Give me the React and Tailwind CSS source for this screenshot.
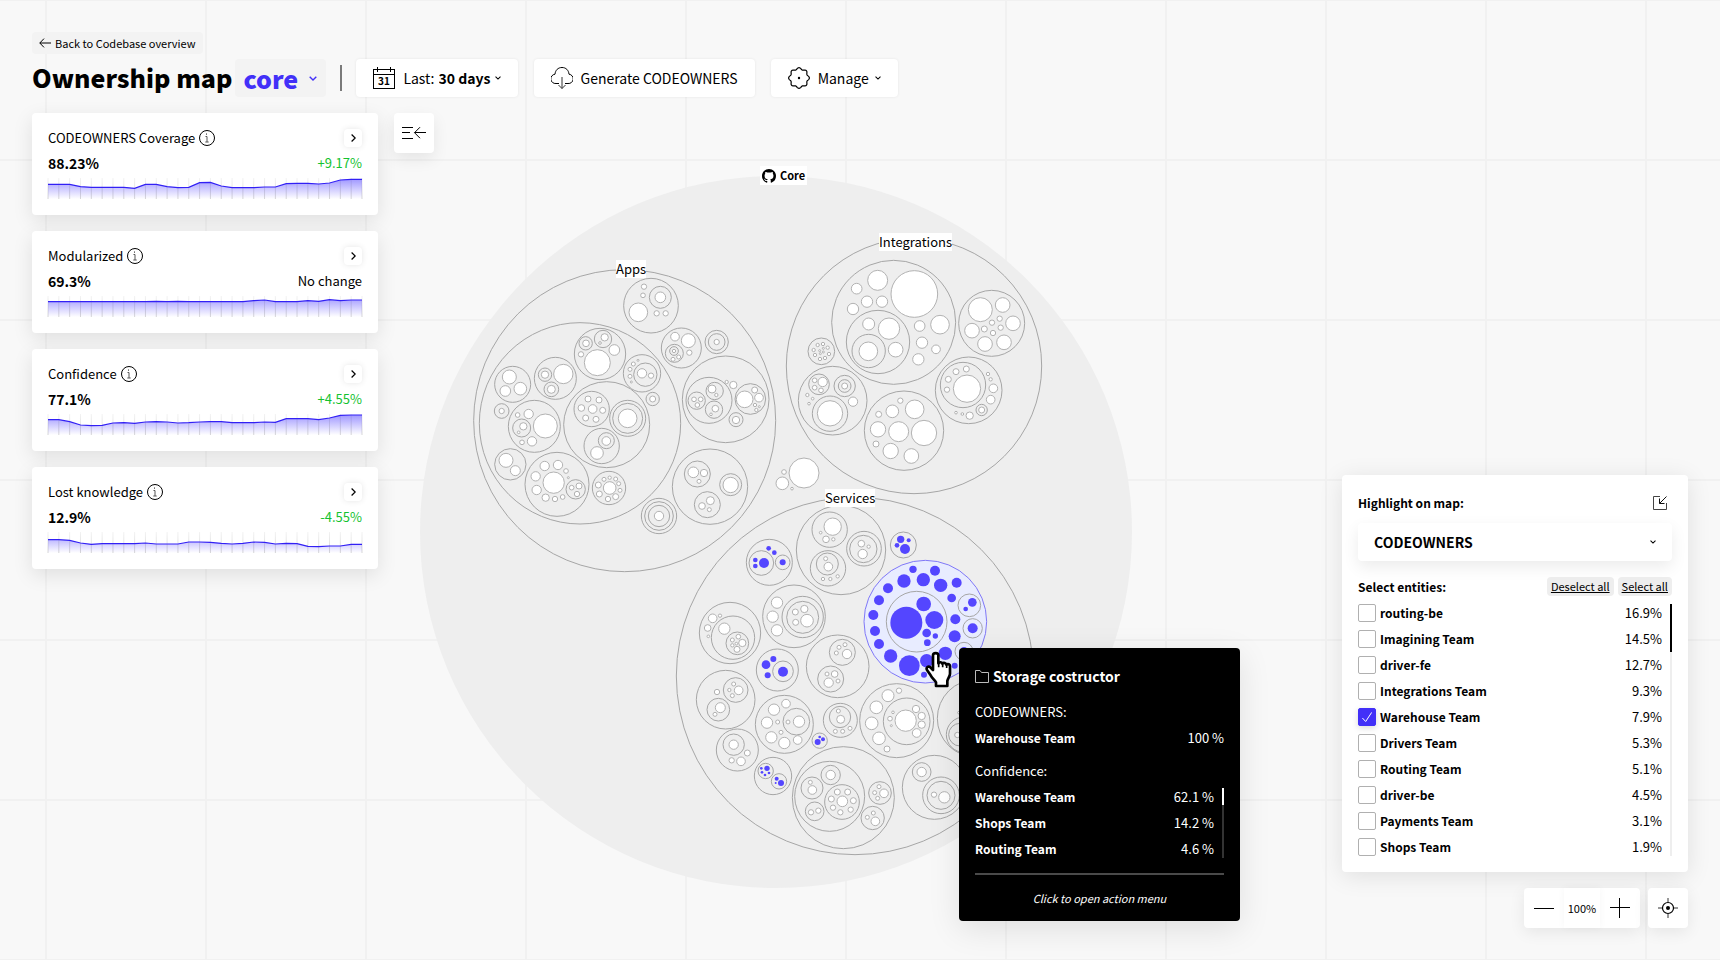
import React, { useState } from 'react'

const metrics = [
    {
        title: 'CODEOWNERS Coverage',
        value: '88.23%',
        change: '+9.17%',
        points: [19, 19, 19, 26, 28, 28, 28, 28, 31, 19, 19, 26, 29, 28, 14, 13, 24, 29, 29, 29, 27, 27, 17, 16, 16, 18, 15, 6, 4, 4]
    },
    {
        title: 'Modularized',
        value: '69.3%',
        change: 'No change',
        points: [17, 17, 17, 17, 17, 17, 17, 17, 17, 17, 16, 17, 16, 17, 17, 17, 17, 17, 17, 14, 12, 17, 17, 17, 14, 16, 11, 14, 12, 12]
    },
    {
        title: 'Confidence',
        value: '77.1%',
        change: '+4.55%',
        points: [17, 17, 23, 33, 35, 34, 27, 26, 28, 24, 23, 24, 27, 26, 24, 23, 23, 26, 26, 26, 24, 25, 14, 14, 14, 17, 12, 4, 3, 3]
    },
    {
        title: 'Lost knowledge',
        value: '12.9%',
        change: '-4.55%',
        points: [23, 23, 25, 33, 37, 35, 35, 35, 35, 33, 36, 36, 36, 30, 30, 31, 34, 36, 34, 30, 31, 36, 34, 35, 43, 44, 42, 42, 37, 37]
    }
]

const entities = [
    ['routing-be', '16.9%'],
    ['Imagining Team', '14.5%'],
    ['driver-fe', '12.7%'],
    ['Integrations Team', '9.3%'],
    ['Warehouse Team', '7.9%'],
    ['Drivers Team', '5.3%'],
    ['Routing Team', '5.1%'],
    ['driver-be', '4.5%'],
    ['Payments Team', '3.1%'],
    ['Shops Team', '1.9%']
]

const confidence = [
    ['Warehouse Team', '62.1 %'],
    ['Shops Team', '14.2 %'],
    ['Routing Team', '4.6 %']
]

// Circles are [cx, cy, r] in thirds of a pixel, relative to the cluster origin
const clusters = [
    {
        name: 'Apps',
        origin: [460, 260],
        rings: [
            [494, 482, 453], [360, 490, 302], [573, 137, 82], [601, 112, 33], [664, 264, 60], [643, 280, 27], [642, 273, 13],
            [770, 246, 35], [770, 246, 25], [797, 418, 130], [747, 421, 69], [764, 393, 26], [710, 422, 26], [762, 449, 26],
            [871, 417, 46], [828, 479, 21], [750, 680, 113], [712, 642, 39], [812, 674, 33], [742, 734, 39],
            [597, 768, 53], [597, 768, 43], [597, 768, 32], [578, 417, 20], [546, 340, 56], [556, 344, 35],
            [420, 282, 77], [377, 250, 20], [429, 237, 26], [286, 355, 63], [255, 344, 20], [274, 388, 22], [158, 373, 54],
            [125, 453, 22], [223, 499, 78], [185, 504, 27], [440, 494, 129], [395, 447, 53], [503, 475, 54], [503, 475, 45],
            [425, 558, 53], [439, 542, 24], [151, 613, 47], [291, 673, 96], [347, 688, 29], [447, 684, 50]
        ],
        leaves: [
            [601, 112, 16], [552, 80, 8], [549, 106, 7], [535, 157, 28], [590, 160, 8], [617, 160, 8],
            [645, 230, 13], [685, 242, 21], [688, 278, 8], [642, 273, 5], [639, 298, 6], [656, 291, 6], [770, 246, 8],
            [756, 387, 12], [769, 405, 5], [702, 418, 7], [722, 418, 7], [712, 435, 7], [766, 446, 10], [753, 463, 4],
            [800, 366, 5], [820, 375, 11], [854, 418, 25], [884, 390, 9], [897, 413, 13], [885, 435, 5], [898, 440, 3],
            [889, 450, 5], [828, 480, 11], [700, 637, 16], [732, 639, 11], [717, 664, 6], [812, 675, 23],
            [751, 722, 12], [726, 738, 10], [748, 749, 6], [597, 768, 14], [578, 417, 9],
            [546, 340, 14], [573, 347, 8], [534, 301, 3], [520, 312, 6], [510, 328, 6], [510, 349, 6], [514, 366, 3],
            [378, 250, 10], [434, 232, 11], [420, 249, 4], [463, 270, 16], [363, 283, 8], [412, 308, 39],
            [255, 344, 11], [274, 388, 12], [310, 342, 29], [148, 351, 21], [181, 386, 19], [136, 393, 16], [125, 453, 8],
            [206, 462, 14], [173, 465, 7], [256, 498, 36], [216, 544, 14], [186, 547, 7], [190, 499, 11], [176, 517, 4],
            [384, 417, 9], [417, 420, 9], [364, 444, 10], [398, 447, 13], [428, 451, 9], [377, 474, 9], [408, 478, 9],
            [503, 475, 28], [439, 543, 13], [411, 579, 19], [138, 601, 21], [166, 632, 15],
            [254, 618, 14], [294, 615, 14], [318, 633, 7], [325, 653, 3], [227, 649, 14], [281, 668, 32], [230, 690, 14],
            [257, 713, 11], [285, 717, 8], [308, 711, 7], [335, 683, 7], [357, 678, 9], [351, 702, 8],
            [449, 684, 19], [432, 658, 6], [449, 653, 5], [467, 657, 6], [476, 671, 6], [480, 691, 6], [415, 675, 9],
            [418, 702, 9], [444, 717, 8], [467, 710, 9]
        ],
        owned: []
    },
    {
        name: 'Integrations',
        origin: [770, 220],
        rings: [
            [432, 438, 383], [371, 307, 186], [324, 366, 95], [296, 393, 50], [665, 310, 99], [154, 394, 40],
            [188, 542, 103], [147, 493, 31], [224, 498, 32], [224, 498, 19], [180, 581, 53], [402, 632, 119],
            [596, 511, 100], [579, 495, 68], [635, 570, 17]
        ],
        leaves: [
            [323, 181, 30], [433, 222, 70], [260, 206, 16], [291, 245, 17], [336, 245, 17], [249, 267, 17], [449, 318, 16],
            [510, 314, 28], [456, 368, 17], [498, 388, 13], [445, 418, 17], [296, 312, 18], [357, 326, 32], [377, 389, 22],
            [295, 394, 28], [631, 269, 36], [698, 255, 22], [729, 310, 22], [606, 332, 22], [645, 372, 22], [702, 367, 22],
            [689, 296, 8], [666, 308, 8], [643, 327, 9], [692, 323, 8], [669, 339, 8],
            [143, 375, 5], [159, 372, 5], [173, 383, 5], [131, 390, 5], [177, 402, 5], [135, 405, 5], [150, 417, 5],
            [165, 414, 5], [149, 392, 3], [160, 385, 3], [160, 396, 3], [151, 401, 3],
            [158, 486, 14], [134, 481, 7], [134, 503, 7], [153, 511, 7], [224, 498, 9], [112, 525, 5], [128, 536, 4],
            [117, 551, 4], [249, 545, 14], [180, 580, 38], [391, 542, 8], [434, 568, 28], [367, 574, 19], [326, 583, 9],
            [324, 628, 23], [386, 635, 30], [462, 639, 38], [318, 672, 9], [362, 693, 23], [424, 708, 22],
            [558, 455, 9], [589, 447, 9], [535, 478, 9], [531, 509, 8], [591, 506, 41], [654, 462, 5], [662, 478, 5],
            [670, 505, 13], [662, 539, 13], [558, 578, 4], [577, 582, 4], [599, 587, 11], [635, 570, 9],
            [102, 759, 45], [42, 756, 7], [37, 790, 19], [66, 806, 4]
        ],
        owned: []
    },
    {
        name: 'Services, upper',
        origin: [660, 480],
        rings: [
            [585, 588, 536], [543, 210, 134], [509, 149, 53], [612, 206, 52], [610, 207, 41], [504, 265, 53], [502, 252, 33],
            [328, 247, 69], [304, 249, 37], [368, 247, 22], [730, 195, 39], [402, 409, 94], [428, 411, 62], [428, 412, 48],
            [210, 459, 92], [219, 473, 65], [232, 490, 34], [352, 570, 63], [369, 574, 31], [533, 559, 94], [547, 517, 39],
            [512, 597, 39], [770, 425, 91], [928, 376, 34], [938, 445, 29], [912, 514, 27]
        ],
        leaves: [
            [518, 140, 26], [482, 158, 4], [498, 178, 10], [520, 178, 5], [604, 191, 10], [626, 200, 5], [608, 222, 14],
            [497, 236, 6], [505, 260, 13], [489, 297, 5], [511, 297, 5], [533, 289, 5], [351, 368, 17], [338, 410, 17],
            [351, 451, 17], [406, 396, 9], [433, 387, 11], [407, 427, 9], [441, 422, 19], [158, 415, 13], [180, 407, 5],
            [143, 444, 10], [145, 469, 4], [193, 446, 17], [235, 470, 7], [217, 480, 6], [247, 489, 11], [217, 496, 5],
            [231, 508, 9], [229, 491, 4], [555, 494, 6], [537, 502, 6], [529, 519, 6], [561, 522, 14],
            [501, 582, 6], [524, 582, 10], [506, 608, 14], [534, 603, 6]
        ],
        owned: [
            [312, 249, 15], [286, 240, 7], [286, 258, 7], [326, 205, 7], [343, 218, 7], [368, 247, 9],
            [722, 178, 11], [746, 181, 6], [711, 196, 7], [735, 207, 15], [340, 537, 9], [318, 554, 13], [323, 586, 9],
            [369, 575, 15], [739, 428, 48], [791, 372, 22], [823, 420, 27], [800, 459, 13], [826, 468, 8], [802, 488, 10],
            [759, 268, 11], [825, 272, 15], [732, 303, 20], [790, 299, 20], [842, 316, 20], [890, 308, 15], [684, 325, 15],
            [875, 354, 13], [657, 361, 15], [640, 405, 15], [886, 418, 15], [645, 453, 15], [884, 469, 18], [657, 492, 15],
            [692, 528, 20], [856, 520, 20], [748, 557, 31], [800, 542, 20], [884, 557, 9], [792, 584, 9],
            [937, 367, 13], [917, 387, 7], [938, 445, 15], [912, 512, 11]
        ]
    },
    {
        name: 'Services, lower',
        origin: [660, 660],
        rings: [
            [197, 119, 88], [227, 90, 37], [175, 149, 34], [373, 193, 87], [409, 185, 40], [541, 181, 51], [540, 171, 32],
            [479, 242, 23], [710, 182, 111], [740, 184, 70], [232, 270, 63], [221, 254, 32], [339, 348, 56], [317, 333, 23],
            [357, 364, 23], [550, 413, 153], [509, 409, 105], [456, 384, 33], [512, 345, 29], [464, 454, 28], [546, 426, 52],
            [660, 399, 34], [638, 474, 35], [823, 382, 96], [785, 336, 28], [843, 406, 55], [843, 406, 42],
            [948, 175, 116], [912, 224, 53], [900, 224, 34]
        ],
        leaves: [
            [221, 72, 6], [208, 90, 5], [236, 91, 13], [217, 107, 6], [171, 96, 8], [181, 143, 15], [165, 163, 6],
            [378, 131, 13], [342, 149, 17], [321, 188, 17], [353, 186, 6], [384, 186, 6], [363, 217, 6], [334, 232, 17],
            [373, 249, 17], [413, 240, 13], [417, 185, 17], [535, 153, 6], [542, 178, 12], [526, 214, 6], [548, 214, 6],
            [570, 205, 6], [684, 107, 18], [717, 92, 8], [649, 142, 19], [635, 190, 19], [657, 235, 19], [681, 267, 9],
            [737, 182, 32], [768, 147, 11], [785, 168, 11], [785, 194, 11], [770, 219, 13], [699, 157, 4], [690, 176, 7],
            [694, 197, 3], [221, 254, 14], [262, 279, 9], [215, 301, 8], [243, 304, 13], [451, 367, 6], [457, 390, 13],
            [512, 345, 14], [453, 457, 8], [475, 452, 8], [547, 424, 16], [532, 396, 9], [563, 396, 9], [514, 417, 9],
            [580, 422, 9], [519, 443, 8], [572, 449, 8], [541, 457, 8], [657, 380, 6], [644, 398, 6], [672, 400, 13],
            [653, 415, 6], [640, 459, 6], [622, 472, 6], [646, 484, 13], [785, 336, 14], [822, 404, 8], [853, 412, 17],
            [897, 158, 4], [892, 225, 8]
        ],
        owned: [
            [473, 246, 9], [489, 238, 6], [479, 231, 4], [321, 325, 8], [304, 325, 4], [306, 337, 4], [327, 339, 4],
            [315, 345, 4], [350, 356, 6], [363, 369, 9], [347, 369, 3]
        ]
    }
]

const Circles = ({ items, origin }) => items.map(([x, y, r]) => (
    <circle key={`${x}-${y}-${r}`} cx={origin[0] + x / 3} cy={origin[1] + y / 3} r={r / 3} />
))

const OwnershipMap = () => (
    <svg className="absolute inset-0 w-full h-full" aria-hidden="true">
        <circle cx="776" cy="532" r="356" fill="#eeeeee" />
        <circle cx={660 + 796 / 3} cy={480 + 425 / 3} r={184 / 3} fill="#e8ecff" stroke="#8078f7" />
        {clusters.map(({ name, origin, rings, leaves, owned }) => (
            <g key={name}>
                <g fill="none" stroke="#a6a6a6"><Circles items={rings} origin={origin} /></g>
                <g fill="#ffffff" stroke="#b2b2b2"><Circles items={leaves} origin={origin} /></g>
                <g fill="#5446ff"><Circles items={owned} origin={origin} /></g>
            </g>
        ))}
    </svg>
)

const HandCursor = () => (
    <svg className="absolute left-[925px] top-[650px] z-30" width="28" height="38" viewBox="0 0 84 114" aria-hidden="true">
        <path
            d="M24 16c0-9 16-9 16 0v24c4-5 11-4 12 1 4-4 11-2 12 3 5-4 11-1 11 5v22c0 8-7 14-8 22v15H33V97c-4-7-11-12-16-21L6 60c-4-8 4-13 10-8l8 8z"
            fill="#fff" stroke="#000" strokeWidth="8" strokeLinejoin="round"
        />
        <path d="M41 38v14M53 40v12M65 44v10" fill="none" stroke="#000" strokeWidth="5" />
    </svg>
)

const Caret = ({ className }) => (
    <svg className={className} viewBox="0 0 8 5" fill="none" stroke="currentColor" strokeWidth="1.4" aria-hidden="true">
        <path d="M.7.7 4 4 7.3.7" />
    </svg>
)

// Eight soft teeth around the centre
const gearPath = Array.from({ length: 97 }, (_, i) => {
    const a = (i / 96) * Math.PI * 2
    const r = 9.5 + 0.9 * Math.cos(8 * a)
    return `${i ? 'L' : 'M'}${(11 + r * Math.sin(a)).toFixed(2)} ${(11 - r * Math.cos(a)).toFixed(2)}`
}).join('')

const Sparkline = ({ id, points }) => {
    const line = points.map((y, x) => `${x},${y}`).join(' ')
    return (
        <svg className="block w-full h-[21px] mt-[3px] overflow-visible" viewBox="0 0 29 63" preserveAspectRatio="none" aria-hidden="true">
            <defs>
                <linearGradient id={`${id}-area`} gradientUnits="userSpaceOnUse" x1="0" y1="0" x2="0" y2="63">
                    <stop offset="0" stopColor="#4a3aff" stopOpacity="0.55" />
                    <stop offset="1" stopColor="#4a3aff" stopOpacity="0" />
                </linearGradient>
                <linearGradient id={`${id}-tick`} gradientUnits="userSpaceOnUse" x1="0" y1="0" x2="0" y2="63">
                    <stop offset="0" stopColor="#000" stopOpacity="0.05" />
                    <stop offset="1" stopColor="#000" stopOpacity="0.16" />
                </linearGradient>
            </defs>
            <polygon points={`0,63 ${line} 29,63`} fill={`url(#${id}-area)`} />
            {points.map((_, x) => (
                <path key={x} d={`M${x} 0L${x + 0.001} 63`} stroke={`url(#${id}-tick)`} vectorEffect="non-scaling-stroke" />
            ))}
            <polyline points={line} fill="none" stroke="#3220f5" strokeWidth="1.2" vectorEffect="non-scaling-stroke" />
        </svg>
    )
}

const MetricCard = ({ id, title, value, change, points }) => (
    <section className="p-4 bg-white rounded shadow-[0_6px_20px_rgba(0,0,0,0.1)]">
        <div className="flex items-center h-[18px]">
            <h2 className="text-[13px] leading-[18px]">{title}</h2>
            <svg className="w-4 h-4 ml-1" viewBox="0 0 16 16" fill="none" stroke="#000" aria-hidden="true">
                <circle cx="8" cy="8" r="7.5" />
                <path d="M6.5 6.5H8V12M6.3 12h3.4" stroke="#555" />
                <path d="M7.5 3.5v1.200" stroke="#333" />
            </svg>
            <button aria-label={`Open ${title}`} className="ml-auto w-[18px] h-[18px] flex items-center justify-center bg-white rounded-sm shadow-[0_0_6px_rgba(0,0,0,0.1)]">
                <svg className="w-[5px] h-2" viewBox="0 0 5 8" fill="none" stroke="#000" strokeWidth="1.2" aria-hidden="true">
                    <path d="M.6.5 4.2 4 .6 7.5" />
                </svg>
            </button>
        </div>
        <div className="flex items-center justify-between mt-1 h-6">
            <p className="text-[14px] font-bold">{value}</p>
            <p className={change === 'No change' ? 'text-[13px]' : 'text-[13px] text-[#14c22f]'}>{change}</p>
        </div>
        <Sparkline id={id} points={points} />
    </section>
)

const toolbarButton = 'h-[38px] px-[17px] flex items-center bg-white rounded text-[14px] shadow-[0_0_3px_rgba(0,0,0,0.08)]'

const Header = () => (
    <header className="relative z-10">
        <a href="#overview" className="flex w-fit items-center h-[22px] px-[7px] rounded bg-[#f3f3f3] text-[11px]">
            <svg className="w-3 h-[10px] mr-1" viewBox="0 0 12 10" fill="none" stroke="#000" aria-hidden="true">
                <path d="M12 5H.8M5 .6.8 5 5 9.4" />
            </svg>
            Back to Codebase overview
        </a>
        <div className="flex items-center h-[38px] mt-[5px]">
            <h1 className="text-[25px] font-black">Ownership map</h1>
            <div className="relative ml-[3px]">
                <select aria-label="Repository" className="appearance-none h-[38px] pl-2 pr-7 rounded bg-[#f3f3f3] text-[25px] leading-[38px] font-black text-[#4230f8]">
                    <option>core</option>
                </select>
                <Caret className="absolute right-[9px] top-[17px] w-2 h-[5px] text-[#4230f8] pointer-events-none" />
            </div>
            <span className="w-[2px] h-[26px] mx-[14px] bg-[#7a7a7a]" />
            <div className="flex gap-4">
                <label className={toolbarButton}>
                    <svg className="w-[22px] h-[22px] mr-2" viewBox="0 0 22 22" fill="none" stroke="#000" aria-hidden="true">
                        <rect x="0.5" y="2.5" width="21" height="19" />
                        <path d="M0 7.5h22M4.5 0v5M17.5 0v5" />
                        <text x="11" y="18" textAnchor="middle" fontSize="10" fontWeight="700" fill="#000" stroke="none">31</text>
                    </svg>
                    Last:
                    <span className="relative ml-1">
                        <select className="appearance-none h-[38px] pr-[10px] leading-[38px] font-bold">
                            <option>30 days</option>
                        </select>
                        <Caret className="absolute right-0 top-[17px] w-[6px] h-1 pointer-events-none" />
                    </span>
                </label>
                <button className={toolbarButton}>
                    <svg className="w-[22px] h-[22px] mr-2" viewBox="0 0 22 22" fill="none" stroke="#000" aria-hidden="true">
                        <path d="M8 16.5H5A4.6 4.6 0 0 1 4 7.2C4.400 3.200 7 .5 11 .5s6.600 2.700 7 6.700A4.600 4.600 0 0 1 17 16.500H14" />
                        <path d="M11 10v11.500M7.500 18 11 21.500l3.500-3.500" stroke="#333" />
                    </svg>
                    Generate CODEOWNERS
                </button>
                <button className={toolbarButton}>
                    <svg className="w-[22px] h-[22px] mr-2" viewBox="0 0 22 22" fill="none" stroke="#000" strokeWidth="1.2" strokeLinejoin="round" aria-hidden="true">
                        <path d={gearPath} />
                        <circle cx="11" cy="11" r="1.2" fill="#000" stroke="none" />
                    </svg>
                    Manage
                    <Caret className="ml-[6px] w-[6px] h-1" />
                </button>
            </div>
        </div>
    </header>
)

const Tooltip = () => (
    <div role="tooltip" className="absolute left-[959px] top-[648px] z-20 w-[281px] p-4 bg-black text-white rounded text-[13px] shadow-[0_8px_32px_rgba(0,0,0,0.1)]">
        <h2 className="flex items-center text-[14px] leading-6 font-bold">
            <svg className="w-[14px] h-[13px] mr-1" viewBox="0 0 14 13" fill="none" stroke="#bbb" aria-hidden="true">
                <path d="M.5 12.500V.500h4.500l1.500 2h7v10z" />
            </svg>
            Storage costructor
        </h2>
        <h3 className="mt-[11px] leading-[26px]">CODEOWNERS:</h3>
        <p className="flex justify-between leading-[26px]">
            <span className="text-[12px] font-bold">Warehouse Team</span>
            <span>100 %</span>
        </p>
        <h3 className="mt-[7px] leading-[26px]">Confidence:</h3>
        <div className="flex">
            <ul className="flex-1">
                {confidence.map(([team, share]) => (
                    <li key={team} className="flex justify-between leading-[26px]">
                        <span className="text-[12px] font-bold">{team}</span>
                        <span>{share}</span>
                    </li>
                ))}
            </ul>
            <div className="w-[2px] my-1 ml-2 bg-[#333]">
                <div className="h-[17px] bg-white" />
            </div>
        </div>
        <hr className="mt-[11px] border-t-2 border-[#4a4a4a]" />
        <p className="mt-4 text-center text-[11px] leading-[14px] italic">Click to open action menu</p>
    </div>
)

const HighlightPanel = () => {
    const [selected, setSelected] = useState(['Warehouse Team'])

    const toggle = (name) => {
        setSelected(prev => prev.includes(name) ? prev.filter(n => n !== name) : [...prev, name])
    }

    return (
        <section className="w-[346px] p-4 bg-white rounded shadow-[0_4px_24px_rgba(0,0,0,0.1)]">
            <div className="flex items-center justify-between h-6 pr-[5px]">
                <label htmlFor="highlight" className="text-[12px] font-bold">Highlight on map:</label>
                <button aria-label="Minimize panel">
                    <svg className="w-[14px] h-[14px]" viewBox="0 0 14 14" fill="none" stroke="#111" aria-hidden="true">
                        <path d="M7 .5H.5v13h13V7" stroke="#444" />
                        <path d="M13.500.5 6.500 7.500M6.500 2.500v5h5" />
                    </svg>
                </button>
            </div>
            <div className="relative mt-2">
                <select id="highlight" className="appearance-none block w-full h-[38px] px-4 bg-white rounded text-[14px] leading-[38px] font-bold shadow-[0_6px_16px_rgba(0,0,0,0.08)]">
                    <option>CODEOWNERS</option>
                </select>
                <Caret className="absolute right-4 top-[17px] w-[6px] h-1 pointer-events-none" />
            </div>
            <div className="flex items-center mt-4 h-[19px]">
                <h2 className="mr-auto text-[12px] font-bold">Select entities:</h2>
                <button onClick={() => setSelected([])} className="h-[19px] px-1 mr-1 rounded bg-[#eeeeee] text-[11px] leading-[19px] underline">Deselect all</button>
                <button onClick={() => setSelected(entities.map(e => e[0]))} className="h-[19px] px-1 rounded bg-[#eeeeee] text-[11px] leading-[19px] underline">Select all</button>
            </div>
            <div className="flex mt-2">
                <ul className="flex-1 flex flex-col gap-2">
                    {entities.map(([name, share]) => (
                        <li key={name} className="flex items-center justify-between h-[18px]">
                            <label className="relative flex items-center gap-1 text-[12px] font-bold">
                                <input
                                    type="checkbox"
                                    checked={selected.includes(name)}
                                    onChange={() => toggle(name)}
                                    className="peer appearance-none w-[18px] h-[18px] rounded-xs border border-[#b0b0b0] bg-white checked:bg-[#4230f8] checked:border-[#4230f8] checked:shadow-[0_2px_6px_rgba(0,0,0,0.15)]"
                                />
                                <svg className="absolute left-1 top-1/2 -translate-y-1/2 w-[10px] h-[10px] hidden peer-checked:block pointer-events-none" viewBox="0 0 10 10" fill="none" stroke="#fff" aria-hidden="true">
                                    <path d="M.4 6 3.700 9.500 9.700.4" />
                                </svg>
                                {name}
                            </label>
                            <span className="text-[13px]">{share}</span>
                        </li>
                    ))}
                </ul>
                <div className="w-[2px] ml-2 bg-[#eeeeee]">
                    <div className="h-12 bg-black" />
                </div>
            </div>
        </section>
    )
}

const ZoomControls = () => (
    <div className="flex justify-end gap-2 mt-4">
        <div className="flex items-center h-10 bg-white rounded shadow-[0_4px_16px_rgba(0,0,0,0.08)]">
            <button aria-label="Zoom out" className="w-10 h-10 flex items-center justify-center">
                <span className="w-5 h-px bg-black" />
            </button>
            <span className="w-9 h-10 text-center text-[11px] leading-10 shadow-[0_0_8px_rgba(0,0,0,0.04)]">100%</span>
            <button aria-label="Zoom in" className="w-10 h-10 flex items-center justify-center">
                <svg className="w-5 h-5" viewBox="0 0 20 20" stroke="#000" aria-hidden="true">
                    <path d="M0 9.500h20M9.500 0v20" />
                </svg>
            </button>
        </div>
        <button aria-label="Center map" className="w-10 h-10 flex items-center justify-center bg-white rounded shadow-[0_4px_16px_rgba(0,0,0,0.08)]">
            <svg className="w-5 h-5" viewBox="0 0 20 20" fill="none" stroke="#000" aria-hidden="true">
                <path d="M10 0v4M10 16v4M0 10h4M16 10h4" stroke="#333" />
                <circle cx="10" cy="10" r="5.500" strokeWidth="1.200" />
                <circle cx="10" cy="10" r="2" fill="#000" stroke="none" />
            </svg>
        </button>
    </div>
)

const mapLabel = 'absolute h-[18px] bg-white text-[13px] leading-[18px] whitespace-nowrap'

const App = () => (
    <div className="relative min-h-screen flex flex-col px-8 pt-8 pb-8 overflow-hidden text-black font-['Noto_Sans_CJK_JP','Noto_Sans',sans-serif] bg-[#f8f8f8] bg-[linear-gradient(to_right,#f1f1f1_2px,transparent_2px),linear-gradient(to_bottom,#f1f1f1_2px,transparent_2px)] bg-[size:160px_160px] bg-[position:45px_159px]">
        <div className="absolute inset-0">
            <OwnershipMap />
            <span className="absolute left-[760px] top-[166px] h-[19px] px-[2px] flex items-center bg-white text-[11px] leading-[19px] font-bold">
                <svg className="w-[14px] h-[14px] mr-1" viewBox="0 0 16 16" aria-hidden="true">
                    <path d="M8 0C3.580 0 0 3.580 0 8c0 3.540 2.290 6.530 5.470 7.590.4.070.55-.17.55-.38 0-.19-.01-.82-.01-1.490-2.010.37-2.530-.49-2.690-.94-.09-.23-.48-.94-.82-1.130-.28-.15-.68-.52-.01-.53.63-.01 1.080.58 1.230.82.72 1.210 1.870.87 2.330.66.07-.52.28-.87.51-1.070-1.780-.2-3.640-.89-3.640-3.950 0-.87.31-1.590.82-2.150-.08-.2-.36-1.020.08-2.120 0 0 .67-.21 2.200.82.64-.18 1.320-.27 2-.27s1.360.09 2 .27c1.530-1.040 2.200-.82 2.200-.82.44 1.100.16 1.920.08 2.120.51.56.82 1.270.82 2.150 0 3.070-1.870 3.750-3.650 3.950.29.25.54.73.54 1.480 0 1.070-.01 1.930-.01 2.200 0 .21.15.46.55.38A8.010 8.010 0 0 0 16 8c0-4.420-3.580-8-8-8z" />
                </svg>
                Core
            </span>
            <span className={`${mapLabel} left-[616px] top-[260px]`}>Apps</span>
            <span className={`${mapLabel} left-[879px] top-[233px]`}>Integrations</span>
            <span className={`${mapLabel} left-[825px] top-[489px]`}>Services</span>
            <HandCursor />
            <Tooltip />
        </div>

        <Header />

        <main className="flex flex-1 items-start mt-4">
            <div className="relative z-10 w-[346px] flex flex-col gap-4">
                {metrics.map((metric, i) => (
                    <MetricCard key={metric.title} id={`metric-${i}`} {...metric} />
                ))}
            </div>
            <button aria-label="Collapse panel" className="relative z-10 ml-4 w-10 h-10 flex items-center justify-center bg-white rounded shadow-[0_6px_16px_rgba(0,0,0,0.08)]">
                <svg className="w-6 h-3" viewBox="0 0 24 12" fill="none" stroke="#000" aria-hidden="true">
                    <path d="M0 .5h11M0 5.500h8M0 11.500h11M24 5.500H12.500M18 .2l-5.500 5.500 5.500 5.500" />
                </svg>
            </button>
            <aside className="relative z-10 ml-auto self-end">
                <HighlightPanel />
                <ZoomControls />
            </aside>
        </main>
    </div>
)

export default App
